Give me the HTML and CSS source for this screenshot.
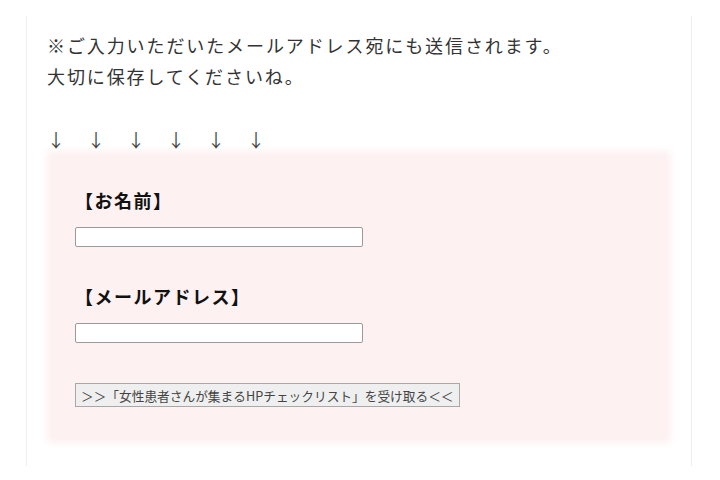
FILE: index.html
```html
<!DOCTYPE html>
<html lang="ja">
<head>
    <meta charset="UTF-8">
    <meta name="viewport" content="width=device-width, initial-scale=1.0">
    <title>チェックリスト申し込み</title>
    <link rel="stylesheet" href="styles.css">
</head>
<body>
    <div class="entry">
        <p class="notice">※ご入力いただいたメールアドレス宛にも送信されます。<br>大切に保存してくださいね。</p>
        <p class="arrows">↓　↓　↓　↓　↓　↓</p>

        <form class="form-box" action="#" method="post">
            <div class="form-group">
                <label for="name">【お名前】</label>
                <input type="text" id="name" name="name">
            </div>
            <div class="form-group">
                <label for="email">【メールアドレス】</label>
                <input type="email" id="email" name="email">
            </div>
            <button type="submit">＞＞「女性患者さんが集まるHPチェックリスト」を受け取る＜＜</button>
        </form>
    </div>
</body>
</html>
```

FILE: styles.css
```css
body {
    margin: 0;
    padding: 16px 0 0;
    background-color: #fff;
    font-family: "Noto Sans CJK JP", "Noto Sans", sans-serif;
    color: #333;
}
.entry {
    margin-left: 26px;
    width: 624px;
    padding: 14px 20px 27px;
    border-left: 1px solid #eee;
    border-right: 1px solid #eee;
}
.notice {
    margin: 0;
    font-size: 18px;
    line-height: 31px;
    letter-spacing: 1.9px;
}
.arrows {
    margin: 32px 0 0;
    font-size: 18px;
    line-height: 31px;
    letter-spacing: 2px;
    color: #444;
}
.form-box {
    margin: 0 4px;
    padding: 30px 24px 32px;
    background-color: #fdf1f1;
    box-shadow: 0 0 8px 4px #fdf1f1;
}
.form-group {
    margin-bottom: 34px;
}
.form-group label {
    display: block;
    font-size: 18px;
    font-weight: bold;
    line-height: 30px;
    letter-spacing: 1.5px;
    color: #111;
    margin-bottom: 12px;
}
.form-group input {
    display: block;
    box-sizing: border-box;
    width: 288px;
    height: 20px;
    margin: 0;
    border: 1px solid #9a9a9a;
    border-radius: 2px;
    background-color: #fff;
}
button {
    display: block;
    margin-top: 40px;
    height: 24px;
    padding: 0 5px;
    font-family: "Noto Sans CJK JP", sans-serif;
    font-size: 12.7px;
    color: #444;
    background-color: #efefef;
    border: 1px solid #a8a8a8;
    border-radius: 0;
    cursor: pointer;
}
```
